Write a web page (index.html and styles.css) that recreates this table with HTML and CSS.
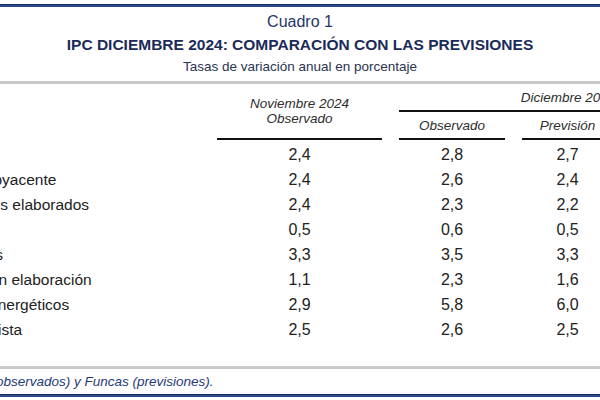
FILE: index.html
```html
<!DOCTYPE html>
<html lang="es">
<head>
<meta charset="utf-8">
<title>Cuadro 1</title>
<link rel="stylesheet" href="styles.css">
</head>
<body>
<div class="page">
  <div class="rule-navy top"></div>
  <header class="head">
    <div class="cuadro">Cuadro 1</div>
    <h1 class="title">IPC DICIEMBRE 2024: COMPARACIÓN CON LAS PREVISIONES</h1>
    <div class="subtitle">Tasas de variación anual en porcentaje</div>
  </header>
  <div class="rule-gray first"></div>
  <div class="table">
    <div class="thead">
      <div class="nov">Noviembre 2024<br>Observado</div>
      <div class="dic">Diciembre 2024</div>
      <div class="sub-h c3">Observado</div>
      <div class="sub-h c4">Previsión</div>
      <div class="sub-h c5">Diferencia</div>
    </div>
    <div class="tbody">
      <div class="row"><span class="lab l0">IPC general</span><span class="num">2,4</span><span class="num">2,8</span><span class="num">2,7</span><span class="num"></span></div>
      <div class="row"><span class="lab l1">Inflación subyacente</span><span class="num">2,4</span><span class="num">2,6</span><span class="num">2,4</span><span class="num"></span></div>
      <div class="row"><span class="lab l2">Alimentos elaborados</span><span class="num">2,4</span><span class="num">2,3</span><span class="num">2,2</span><span class="num"></span></div>
      <div class="row"><span class="lab l2">BINE</span><span class="num">0,5</span><span class="num">0,6</span><span class="num">0,5</span><span class="num"></span></div>
      <div class="row"><span class="lab l2">Servicios</span><span class="num">3,3</span><span class="num">3,5</span><span class="num">3,3</span><span class="num"></span></div>
      <div class="row"><span class="lab l1">Alimentos sin elaboración</span><span class="num">1,1</span><span class="num">2,3</span><span class="num">1,6</span><span class="num"></span></div>
      <div class="row"><span class="lab l1">Productos energéticos</span><span class="num">2,9</span><span class="num">5,8</span><span class="num">6,0</span><span class="num"></span></div>
      <div class="row"><span class="lab l1 tight">Precio minorista</span><span class="num">2,5</span><span class="num">2,6</span><span class="num">2,5</span><span class="num"></span></div>
    </div>
  </div>
  <div class="rule-gray last"></div>
  <p class="foot">Fuentes: INE (observados) y Funcas (previsiones).</p>
  <div class="rule-navy bottom"></div>
</div>
</body>
</html>
```
FILE: styles.css
```css
html, body {
  margin: 0;
  padding: 0;
  overflow: hidden;
  background: #ffffff;
}

body {
  font-family: "Liberation Sans", Arial, sans-serif;
  width: 600px;
  height: 400px;
}

.page {
  width: 600px;
  overflow: hidden;
}

.rule-navy {
  height: 2px;
  border-top: 1px solid #1a2d5c;
  background: #2b4a8c;
}

.top {
  margin-top: 4px;
}

.head {
  text-align: center;
}

.cuadro {
  margin-top: 5px;
  font-size: 16px;
  line-height: 20px;
  color: #1f3668;
}

.title {
  margin: 3px 0 0;
  font-size: 15.5px;
  line-height: 20px;
  font-weight: bold;
  color: #1b2b58;
}

.subtitle {
  margin-top: 3px;
  font-size: 13.5px;
  line-height: 18px;
  color: #2a3350;
}

.rule-gray {
  height: 3px;
  background: #c9c9c9;
}

.rule-gray.first {
  margin-top: 5px;
}

.rule-gray.last {
  margin-top: 24px;
}

.table {
  margin-left: -120px;
  width: 857px;
}

.thead,
.row {
  display: grid;
  grid-template-columns: 320px 165px 106px 91px 107px;
  column-gap: 17px;
}

.thead {
  grid-template-rows: auto auto;
  font-style: italic;
  font-size: 13.5px;
  line-height: 15px;
  color: #2e2e2e;
  text-align: center;
}

.nov {
  grid-column: 2;
  grid-row: 1 / 3;
  align-self: end;
  padding-bottom: 12px;
  border-bottom: 2px solid #111111;
}

.dic {
  grid-column: 3 / 6;
  grid-row: 1;
  padding: 6px 0 5px;
  border-bottom: 2px solid #111111;
}

.sub-h {
  grid-row: 2;
  padding: 6px 0 5px;
  border-bottom: 2px solid #111111;
}

.c3 { grid-column: 3; }
.c4 { grid-column: 4; }
.c5 { grid-column: 5; }

.tbody {
  padding-top: 2px;
}

.row {
  line-height: 25px;
  color: #222222;
}

.lab {
  font-size: 15.5px;
  white-space: nowrap;
}

.num {
  font-size: 16px;
  text-align: center;
}

.l0 { padding-left: 10px; }
.l1 { padding-left: 35px; }
.l1.tight { padding-left: 31px; }
.l2 { padding-left: 60px; }

.foot {
  margin: 5px 0 0 -120px;
  padding-left: 29px;
  font-style: italic;
  font-size: 13.5px;
  line-height: 16px;
  color: #1f3a78;
  white-space: nowrap;
}

.bottom {
  margin-top: 4px;
}
```
